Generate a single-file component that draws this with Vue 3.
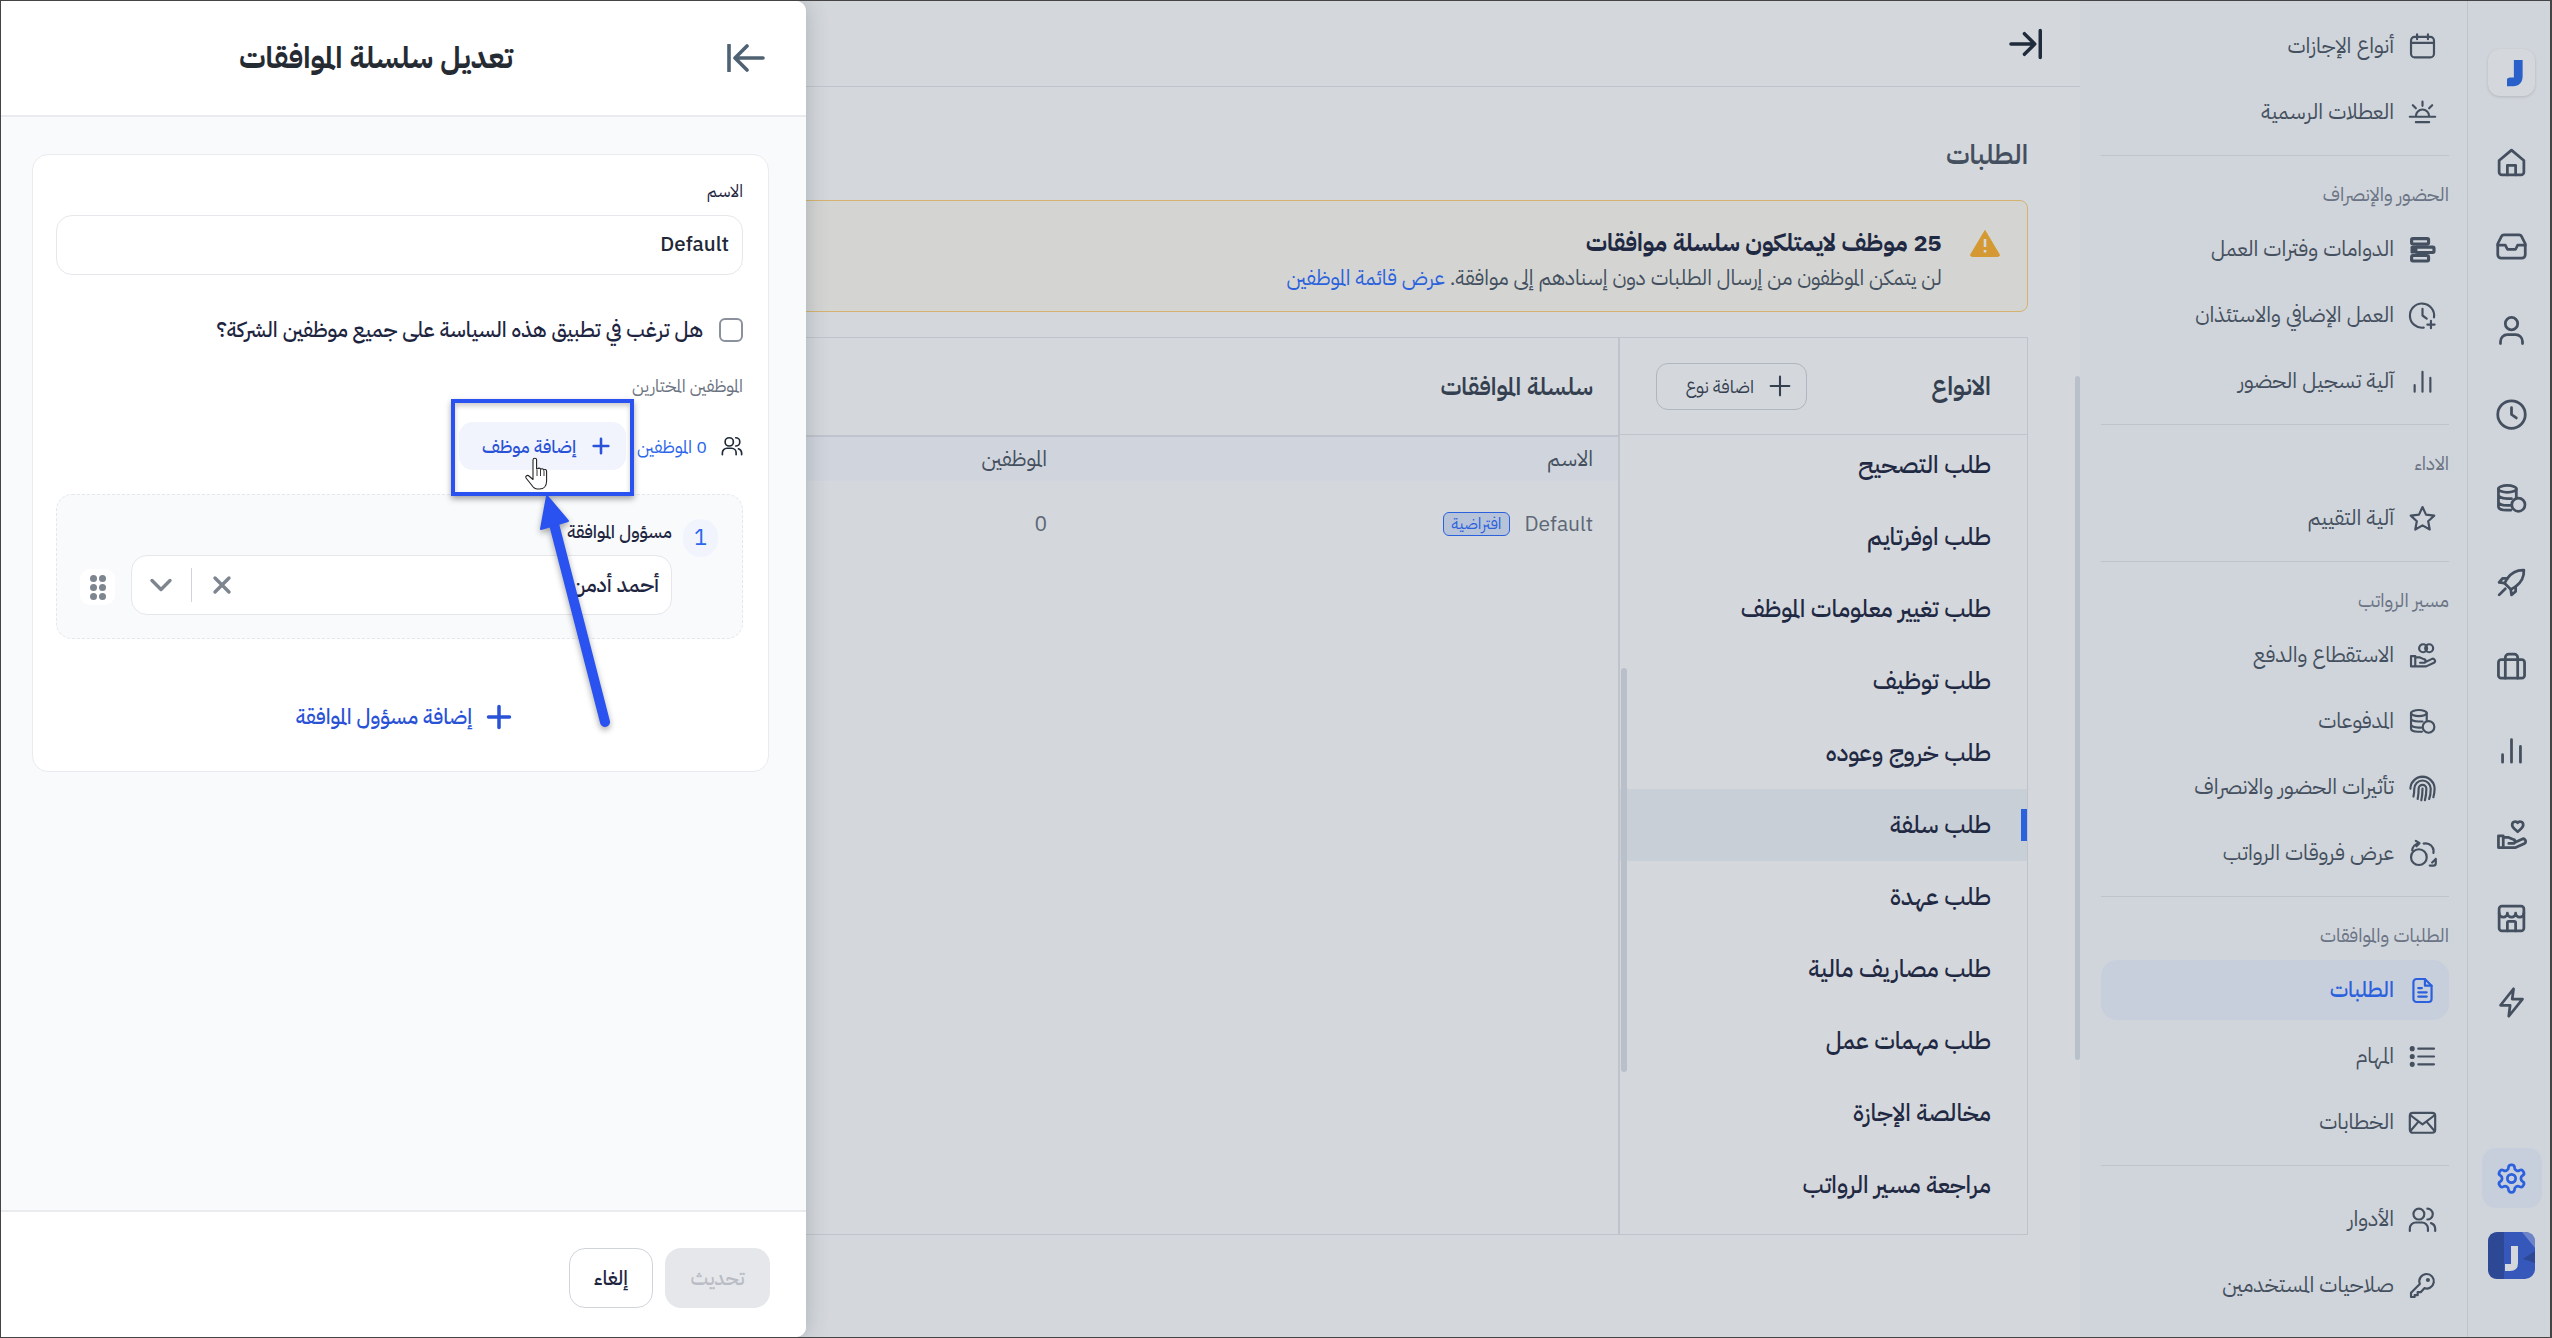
<template>
  <div class="app" dir="rtl">
    <nav class="rail">
      <div class="rail-logo">
        <svg viewBox="0 0 24 24" width="30" height="30"><path d="M13.5 1.500H20.500v13c0 5-3 8-7.500 8H8v-6l2-1h3.500z" fill="#2b69e8" /></svg>
      </div>
      <div class="rail-icons">
        <div v-for="name in railIcons" :key="name" class="rail-item">
          <svg class="ico" viewBox="0 0 24 24" width="33" height="33" v-html="icons[name]"></svg>
        </div>
      </div>
      <div class="rail-bottom">
        <div class="rail-item active">
          <svg class="ico" viewBox="0 0 24 24" width="33" height="33" v-html="icons.gear"></svg>
        </div>
        <svg class="avatar" viewBox="0 0 47 47" width="47" height="47">
          <rect width="47" height="47" rx="10" fill="#3a5fd6" />
          <path d="M0 10q0-10 10-10h6v47h-6q-10 0-10-10z" fill="#2f4ba6" />
          <path d="M34 0h3q10 0 10 10v6z" fill="#7f97e6" />
          <path d="M35 27l12-8v12z" fill="#2f4ba6" />
          <path d="M23 14h7v17q0 8-8 8h-5v-7h6z" fill="#fff" />
        </svg>
      </div>
    </nav>

    <aside class="side">
      <section v-for="group in menu" :key="group.id" class="group" :class="{ plain: !group.title }">
        <h4 v-if="group.title">{{ group.title }}</h4>
        <a v-for="item in group.items" :key="item.text" class="menu-item" :class="{ active: item.active }">
          <svg class="ico" viewBox="0 0 24 24" width="29" height="29" v-html="icons[item.icon]"></svg>
          <span>{{ item.text }}</span>
        </a>
      </section>
    </aside>

    <main class="main">
      <header class="topbar">
        <svg class="ico" viewBox="0 0 24 24" width="38" height="38"><path d="M21 3.500v17M2.500 12H17M11 5.500l6.500 6.500-6.500 6.500" /></svg>
      </header>
      <div class="content">
        <h1>الطلبات</h1>
        <div class="alert">
          <svg viewBox="0 0 30 28" width="30" height="28">
            <path d="M15 1.500 29 25a1.500 1.500 0 0 1-1.300 2.500H2.300A1.500 1.500 0 0 1 1 25z" fill="#ffb12c" stroke="#ffb12c" stroke-linejoin="round" />
            <path d="M15 10v8M15 21v2.500" stroke="#fff" stroke-width="2.600" fill="none" />
          </svg>
          <div class="alert-text">
            <strong>25 موظف لايمتلكون سلسلة موافقات</strong>
            <p>لن يتمكن الموظفون من إرسال الطلبات دون إسنادهم إلى موافقة. <a>عرض قائمة الموظفين</a></p>
          </div>
        </div>

        <div class="board">
          <div class="types">
            <div class="types-head">
              <h3>الانواع</h3>
              <button class="add-type">
                <svg class="ico" viewBox="0 0 24 24" width="28" height="28"><path d="M12 4v16M4 12h16" /></svg>
                اضافة نوع
              </button>
            </div>
            <ul>
              <li v-for="type in types" :key="type" :class="{ selected: type === 'طلب سلفة' }">{{ type }}</li>
            </ul>
            <div class="types-thumb"></div>
          </div>
          <div class="chains">
            <h3 class="chains-title">سلسلة الموافقات</h3>
            <div class="table-row head"><span>الاسم</span><span>الموظفين</span></div>
            <div class="table-row">
              <span class="name">Default <em>افتراضية</em></span>
              <span>0</span>
            </div>
          </div>
        </div>
      </div>
      <div class="main-thumb"></div>
    </main>

    <div class="overlay"></div>

    <div class="drawer">
      <header class="drawer-head">
        <svg class="ico" viewBox="0 0 38 28" width="38" height="28"><path d="M36 14H8M20 2 8 14l12 12M2 1v26" /></svg>
        <h2>تعديل سلسلة الموافقات</h2>
      </header>
      <div class="drawer-body">
        <div class="form-card">
          <label class="field-label">الاسم</label>
          <div class="input">Default</div>
          <div class="check-row">
            <span class="checkbox"></span>
            <span>هل ترغب في تطبيق هذه السياسة على جميع موظفين الشركة؟</span>
          </div>
          <div class="muted-label">الموظفين المختارين</div>
          <div class="staff-row">
            <svg class="ico users" viewBox="0 0 24 24" width="22" height="22" v-html="icons.users"></svg>
            <span class="staff-count">0 الموظفين</span>
            <button class="add-staff">
              <svg class="ico" viewBox="0 0 24 24" width="22" height="22"><path d="M12 4v16M4 12h16" /></svg>
              إضافة موظف
            </button>
          </div>
          <div class="approver">
            <span class="step">1</span>
            <div class="approver-main">
              <div class="approver-label">مسؤول الموافقة</div>
              <div class="select">
                <span>أحمد أدمن</span>
                <div class="select-tools">
                  <svg viewBox="0 0 24 24" width="24" height="24" class="tool"><path d="M5 5l14 14M19 5 5 19" /></svg>
                  <i></i>
                  <svg viewBox="0 0 24 24" width="24" height="24" class="tool"><path d="M3 7.500l9 9 9-9" /></svg>
                </div>
              </div>
            </div>
            <div class="handle"><b v-for="n in 6" :key="n"></b></div>
          </div>
          <button class="add-approver">
            <svg class="ico" viewBox="0 0 24 24" width="28" height="28"><path d="M12 3v18M3 12h18" /></svg>
            إضافة مسؤول الموافقة
          </button>
        </div>
      </div>
      <footer class="drawer-foot">
        <button class="btn-update">تحديث</button>
        <button class="btn-cancel">إلغاء</button>
      </footer>
    </div>

    <!-- annotation drawn over the screenshot -->
    <div class="mark"></div>
    <svg class="arrow" viewBox="0 0 120 250" width="120" height="250">
      <path d="M100 226 49 28" stroke="#2952f0" stroke-width="10" stroke-linecap="round" fill="none" />
      <path d="M42 0 36 33 63 25z" fill="#2952f0" stroke="#2952f0" stroke-width="2" stroke-linejoin="round" />
    </svg>
    <svg class="hand" viewBox="0 0 26 34" width="26" height="34">
      <path d="M9 17V3a1.800 1.800 0 0 1 3.600 0v9l1-.2a1.700 1.700 0 0 1 3 .6 1.700 1.700 0 0 1 3 .7 1.700 1.700 0 0 1 3 1V24c0 5-3 8-7 8h-2c-3 0-4.500-1.500-6-4L2 21c-1-2 1.500-3.500 3-2l4 3.500z" fill="#fff" stroke="#222" stroke-width="1.100" stroke-linejoin="round" />
      <path d="M13 13v6M16.500 13v6M20 14v5" stroke="#222" stroke-width=".9" fill="none" />
    </svg>
  </div>
</template>

<script setup>
const icons = {
  home: '<path d="M3 10.500 12 3l9 7.500V19a2 2 0 0 1-2 2H5a2 2 0 0 1-2-2z"/><path d="M9 21v-7h6v7"/>',
  inbox: '<path d="M6.500 3.500h11a2 2 0 0 1 1.800 1.100L22 10v8a2.500 2.500 0 0 1-2.500 2.500h-15A2.500 2.500 0 0 1 2 18v-8l2.700-5.400a2 2 0 0 1 1.800-1.100z"/><path d="M2 11h5.500l1.500 3h6l1.500-3H22"/>',
  user: '<circle cx="12" cy="7" r="4.500"/><path d="M4 21.500v-1.500a5 5 0 0 1 5-5h6a5 5 0 0 1 5 5v1.500"/>',
  clock: '<circle cx="12" cy="12" r="10"/><path d="M12 7v5l3.500 2.500"/>',
  coins: '<ellipse cx="9" cy="5" rx="6.500" ry="2.500"/><path d="M2.500 5v13c0 1.400 2.500 2.500 6 2.500h3M15.500 5v6M2.500 9.500C2.500 11 5.500 12 9 12h3M2.500 14.500c0 1.500 3 2.500 6.500 2.500h2"/><circle cx="17" cy="16.500" r="4.800"/>',
  rocket: '<path d="M21 3c-5-.2-9 1.800-12 6l-2 3.500 4.500 4.500 3.500-2c4-3 6.200-7 6-12z"/><path d="M9 9H5.500L3 12l4 .5M15 15v3.500L12 21l-.5-4M3 21l4.500-4.500"/>',
  case: '<rect x="2.500" y="7" width="19" height="13.500" rx="2"/><path d="M7.500 7V5.500a2.500 2.500 0 0 1 2.500-2.500h4a2.500 2.500 0 0 1 2.500 2.500V7M7.500 7v13.500M16.500 7v13.500"/>',
  bars: '<path d="M5.500 20.500v-5.500M12 20.500V4M18.500 20.500V9"/>',
  heart: '<path d="M2.500 13h3.500v8.500H2.500zM6 14h3.500l3.500 1.500a1.500 1.500 0 0 1 0 3h-3M14 18l5.500-2.500a1.800 1.800 0 0 1 2 3l-6.500 3H6"/><path d="M16.500 3.500c-1-1.500-4-1-4 1.500 0 2 2.500 3.500 4 5 1.500-1.500 4-3 4-5 0-2.500-3-3-4-1.500z"/>',
  store: '<rect x="3" y="3" width="18" height="18" rx="2"/><path d="M3 8a3 3 0 0 0 6 0 3 3 0 0 0 6 0 3 3 0 0 0 6 0M9 21v-6a1 1 0 0 1 1-1h4a1 1 0 0 1 1 1v6"/>',
  bolt: '<path d="M13.500 2 4 14h7l-1 8 10-12.500h-7.500z"/>',
  gear: '<path d="M12.220 2h-.44a2 2 0 0 0-2 2v.18a2 2 0 0 1-1 1.730l-.43.250a2 2 0 0 1-2 0l-.15-.08a2 2 0 0 0-2.730.730l-.22.380a2 2 0 0 0 .730 2.730l.15.100a2 2 0 0 1 1 1.720v.510a2 2 0 0 1-1 1.740l-.15.090a2 2 0 0 0-.730 2.730l.22.380a2 2 0 0 0 2.730.730l.15-.08a2 2 0 0 1 2 0l.43.250a2 2 0 0 1 1 1.730V20a2 2 0 0 0 2 2h.44a2 2 0 0 0 2-2v-.18a2 2 0 0 1 1-1.730l.43-.25a2 2 0 0 1 2 0l.15.08a2 2 0 0 0 2.730-.730l.22-.39a2 2 0 0 0-.730-2.730l-.15-.08a2 2 0 0 1-1-1.740v-.5a2 2 0 0 1 1-1.740l.15-.09a2 2 0 0 0 .730-2.730l-.22-.38a2 2 0 0 0-2.730-.730l-.15.08a2 2 0 0 1-2 0l-.43-.25a2 2 0 0 1-1-1.730V4a2 2 0 0 0-2-2z"/><circle cx="12" cy="12" r="3"/>',
  calendar: '<rect x="2.500" y="4" width="19" height="17" rx="3"/><path d="M2.500 9h19M7.500 2v4M16.500 2v4"/>',
  sunset: '<path d="M6.500 15a5.500 5.500 0 0 1 11 0M1.500 15.500h21M6.500 20h11M12 3v3.500M4 6l2.500 2.500M20 6l-2.500 2.500"/>',
  shifts: '<rect x="3" y="3" width="14" height="4.500" rx="1" stroke-width="2.600"/><rect x="6.500" y="10" width="15" height="4.500" rx="1" stroke-width="2.600"/><rect x="3" y="17" width="14" height="4.500" rx="1" stroke-width="2.600"/><path d="M3 10h3v4.500H3z" fill="currentColor"/>',
  overtime: '<path d="M21.500 13.500A10 10 0 1 0 13 22"/><path d="M12 6.500V12l3.500 2.500M19 16.500v6M16 19.500h6"/>',
  star: '<path d="M12 2.500l2.900 6.300 6.800.8-5 4.700 1.300 6.800-6-3.400-6 3.400 1.300-6.800-5-4.700 6.800-.8z"/>',
  handCoins: '<path d="M2.500 12.500h3.500v8.500H2.500zM6 13.500h3.500l3.500 1.500a1.500 1.500 0 0 1 0 3h-3M14 17.500l5.500-2.500a1.800 1.800 0 0 1 2 3l-6.500 3H6"/><circle cx="12.500" cy="6" r="3.300"/><circle cx="17.500" cy="6" r="3.300"/>',
  finger: '<path d="M3.500 8a10 10 0 0 1 17 0M2 13a10 10 0 0 1 20 0c0 3-.5 5-1 7M4.500 19.500c.5-2 .7-4.500.7-6.500a6.800 6.800 0 0 1 13.600 0c0 3-.3 6-1.300 8.500M8 21.500c.5-2.500.8-5.500.8-8.500a3.200 3.200 0 0 1 6.400 0c0 3.500-.4 6.500-1.200 9.500M12 13c0 3.500-.3 6.500-1 9.500"/>',
  diff: '<circle cx="9" cy="15" r="6.500"/><path d="M13 3.800a6.500 6.500 0 0 1 8 7.700M3.500 9.500A6.500 6.500 0 0 1 9 3.500M6.500 1.500 9.500 3.500 7 6M23 16.500v3.500a2 2 0 0 1-2 2h-3M20 19.500 23 16.500"/>',
  doc: '<path d="M14 2.500H7a2.500 2.500 0 0 0-2.500 2.500v14A2.500 2.500 0 0 0 7 21.500h10a2.500 2.500 0 0 0 2.500-2.500V8z"/><path d="M14 2.500V8h5.500M8.500 10h3M8.500 13.500h7M8.500 17h7"/>',
  list: '<path d="M8.500 5.500h13M8.500 12h13M8.500 18.500h13"/><circle cx="3.500" cy="5.500" r="1.200" fill="currentColor"/><circle cx="3.500" cy="12" r="1.200" fill="currentColor"/><circle cx="3.500" cy="18.500" r="1.200" fill="currentColor"/>',
  mail: '<rect x="1.500" y="4" width="21" height="16.500" rx="2.500"/><path d="M2 6l10 7.500L22 6M2 19l6.500-7.500M22 19l-6.500-7.500"/>',
  users: '<circle cx="9" cy="7.500" r="4.500"/><path d="M1.500 21.500v-2a5 5 0 0 1 5-5h5a5 5 0 0 1 5 5v2M16 3a4.500 4.500 0 0 1 0 9M19 15a5 5 0 0 1 3.500 4.500v2"/>',
  key: '<path d="M15.500 2.500a6 6 0 1 1-2 11.700L10.500 17.500H8v2.500H5.500v1.500H2.500v-3.500l7.300-7.300A6 6 0 0 1 15.500 2.500z"/><circle cx="16.500" cy="7.500" r=".8"/>',
}

const railIcons = ['home', 'inbox', 'user', 'clock', 'coins', 'rocket', 'case', 'bars', 'heart', 'store', 'bolt']

const menu = [
  { id: 1, items: [
    { icon: 'calendar', text: 'أنواع الإجازات' },
    { icon: 'sunset', text: 'العطلات الرسمية' },
  ] },
  { id: 2, title: 'الحضور والإنصراف', items: [
    { icon: 'shifts', text: 'الدوامات وفترات العمل' },
    { icon: 'overtime', text: 'العمل الإضافي والاستئذان' },
    { icon: 'bars', text: 'آلية تسجيل الحضور' },
  ] },
  { id: 3, title: 'الاداء', items: [
    { icon: 'star', text: 'آلية التقييم' },
  ] },
  { id: 4, title: 'مسير الرواتب', items: [
    { icon: 'handCoins', text: 'الاستقطاع والدفع' },
    { icon: 'coins', text: 'المدفوعات' },
    { icon: 'finger', text: 'تأثيرات الحضور والانصراف' },
    { icon: 'diff', text: 'عرض فروقات الرواتب' },
  ] },
  { id: 5, title: 'الطلبات والموافقات', items: [
    { icon: 'doc', text: 'الطلبات', active: true },
    { icon: 'list', text: 'المهام' },
    { icon: 'mail', text: 'الخطابات' },
  ] },
  { id: 6, items: [
    { icon: 'users', text: 'الأدوار' },
    { icon: 'key', text: 'صلاحيات المستخدمين' },
    { icon: 'star', text: 'تقييم المهارات والكفايات' },
  ] },
]

const types = [
  'طلب التصحيح',
  'طلب اوفرتايم',
  'طلب تغيير معلومات الموظف',
  'طلب توظيف',
  'طلب خروج وعوده',
  'طلب سلفة',
  'طلب عهدة',
  'طلب مصاريف مالية',
  'طلب مهمات عمل',
  'مخالصة الإجازة',
  'مراجعة مسير الرواتب',
]
</script>

<style>
html, body {
  margin: 0;
  background: #fff;
}
</style>

<style scoped>
* {
  box-sizing: border-box;
}
.app {
  position: relative;
  display: flex;
  width: 2552px;
  height: 1338px;
  overflow: hidden;
  border: 1px solid #444;
  border-right-width: 2px;
  background: #fff;
  color: #1f2937;
  font-family: "IBM Plex Sans Arabic", "Noto Sans", "DejaVu Sans", sans-serif;
  font-variant-ligatures: common-ligatures discretionary-ligatures;
}
button {
  font-family: inherit;
  font-variant-ligatures: inherit;
  cursor: pointer;
}
.ico {
  flex: none;
  fill: none;
  stroke: currentColor;
  stroke-width: 1.800;
  stroke-linecap: round;
  stroke-linejoin: round;
}

/* icon rail */
.rail {
  flex: none;
  display: flex;
  flex-direction: column;
  align-items: center;
  width: 83px;
  height: 100%;
  padding: 48px 0 58px 5px;
  border-left: 1px solid #e5e7eb;
  background: #fbfbfe;
  color: #4b5563;
}
.rail .ico {
  stroke-width: 2;
}
.rail-logo {
  display: flex;
  align-items: center;
  justify-content: center;
  width: 47px;
  height: 47px;
  border-radius: 12px;
  background: #fff;
  box-shadow: 0 1px 3px rgba(0, 0, 0, 0.15);
}
.rail-icons {
  display: flex;
  flex-direction: column;
  gap: 24px;
  margin-top: 36px;
}
.rail-item {
  display: flex;
  align-items: center;
  justify-content: center;
  width: 60px;
  height: 60px;
  border-radius: 14px;
}
.rail-item.active {
  background: #f1f4ff;
  color: #2c6bff;
}
.rail-bottom {
  display: flex;
  flex-direction: column;
  align-items: center;
  gap: 24px;
  margin-top: auto;
}

/* text menu */
.side {
  flex: none;
  width: 387px;
  height: 100%;
  padding: 12px 18px 0 21px;
  overflow: hidden;
  background: #fbfbfe;
}
.group {
  display: flex;
  flex-direction: column;
  padding: 24px 0 10px;
  border-bottom: 1px solid #e5e7eb;
}
.group.plain {
  padding-top: 20px;
}
.group:first-child {
  padding-top: 0;
}
.group:last-child {
  border-bottom: 0;
}
.group h4 {
  height: 30px;
  margin: 0 0 6px;
  font-size: 19px;
  font-weight: 400;
  line-height: 30px;
  color: #7a8291;
}
.menu-item {
  flex: none;
  display: flex;
  align-items: center;
  gap: 14px;
  height: 60px;
  margin: 3px 0;
  padding: 0 12px;
  border-radius: 16px;
  font-size: 21.500px;
  color: #4b5563;
}
.menu-item.active {
  background: #f1f4ff;
  color: #2c6bff;
  font-weight: 500;
}

/* page */
.main {
  position: relative;
  flex: 1;
  min-width: 0;
}
.topbar {
  display: flex;
  align-items: center;
  height: 86px;
  padding: 0 35px;
  border-bottom: 1px solid #e5e7eb;
  color: #1f2937;
}
.topbar .ico {
  stroke-width: 2.200;
}
.content {
  padding: 48px 52px 0 52px;
}
h1 {
  height: 40px;
  margin: 0;
  font-size: 27px;
  font-weight: 600;
  line-height: 40px;
  color: #4b5563;
}
.alert {
  display: flex;
  align-items: flex-start;
  gap: 28px;
  height: 112px;
  margin-top: 25px;
  padding: 28px 27px 0;
  border: 1px solid #ffd178;
  border-radius: 8px;
  background: #fffcf4;
}
.alert svg {
  flex: none;
}
.alert-text {
  margin-top: -5px;
}
.alert-text strong {
  display: block;
  font-size: 24px;
  font-weight: 700;
  line-height: 38px;
  color: #1e2540;
}
.alert-text p {
  margin: 0;
  font-size: 21px;
  line-height: 32px;
  color: #4b5563;
}
.alert-text a {
  color: #2c6bff;
}
.board {
  display: flex;
  height: 898px;
  margin-top: 25px;
  border: 1px solid #e5e7eb;
}
.types {
  position: relative;
  flex: none;
  width: 409px;
  border-left: 2px solid #e5e7eb;
  overflow: hidden;
}
.types-head {
  display: flex;
  align-items: center;
  justify-content: space-between;
  height: 97px;
  padding: 0 36px 0 36px;
  border-bottom: 1px solid #e5e7eb;
}
h3 {
  margin: 0;
  font-size: 24px;
  font-weight: 600;
  color: #374151;
}
.types-head h3 {
  font-size: 25px;
}
.add-type {
  display: flex;
  align-items: center;
  gap: 12px;
  width: 151px;
  height: 47px;
  padding: 0 12px;
  border: 1px solid #d1d5db;
  border-radius: 12px;
  background: #fff;
  font-size: 18px;
  color: #374151;
}
.types ul {
  margin: -6px 0 0;
  padding: 0;
  list-style: none;
}
.types li {
  position: relative;
  display: flex;
  align-items: center;
  height: 72px;
  padding: 0 36px;
  font-size: 24px;
  font-weight: 500;
  color: #1e2540;
}
.types li.selected {
  background: #f1f4f9;
}
.types li.selected::before {
  content: "";
  position: absolute;
  top: 20px;
  right: 0;
  width: 6px;
  height: 32px;
  background: #2c6bff;
}
.types-thumb {
  position: absolute;
  top: 330px;
  left: 1px;
  width: 6px;
  height: 404px;
  border-radius: 3px;
  background: #dfe2e8;
}
.chains {
  flex: 1;
}
.chains-title {
  display: flex;
  align-items: center;
  height: 97px;
  padding: 0 25px;
}
.table-row {
  display: grid;
  grid-template-columns: 546px 1fr;
  align-items: center;
  height: 86px;
  padding: 0 25px;
  font-size: 21px;
  color: #6b7280;
}
.table-row.head {
  height: 46px;
  border-top: 2px solid #e5e7eb;
  background: #fafbff;
  font-size: 21.500px;
  color: #4b5563;
}
.name {
  display: flex;
  align-items: center;
  gap: 14px;
}
.name em {
  padding: 0 8px;
  border: 1px solid #2c6bff;
  border-radius: 6px;
  background: #dbe5fb;
  font-size: 16px;
  font-style: normal;
  line-height: 22px;
  color: #2c6bff;
}
.main-thumb {
  position: absolute;
  top: 375px;
  right: 0;
  width: 5px;
  height: 684px;
  border-radius: 3px;
  background: #dfe2e8;
}

.overlay {
  position: absolute;
  inset: 0;
  background: rgba(40, 60, 80, 0.2);
}

/* side drawer */
.drawer {
  position: absolute;
  top: 0;
  bottom: 0;
  left: 0;
  display: flex;
  flex-direction: column;
  width: 805px;
  background: #f9fafb;
  border-radius: 0 10px 10px 0;
  box-shadow: 0 0 22px rgba(50, 60, 80, 0.25);
}
.drawer-head {
  display: flex;
  align-items: center;
  height: 116px;
  padding: 0 41px 0 0;
  border-bottom: 2px solid #e9ebef;
  background: #fff;
  border-radius: 0 10px 0 0;
  color: #4f6274;
}
.drawer-head .ico {
  stroke-width: 3.600;
}
.drawer-head h2 {
  flex: 1;
  margin: 0 0 2px;
  padding-left: 24px;
  font-size: 30px;
  font-weight: 700;
  text-align: center;
  color: #252b33;
}
.drawer-body {
  flex: 1;
  padding: 37px 37px 0 31px;
}
.form-card {
  height: 618px;
  padding: 23px 25px 0 23px;
  border: 1px solid #e9ebef;
  border-radius: 16px;
  background: #fff;
}
.field-label {
  display: block;
  height: 28px;
  margin-bottom: 9px;
  font-size: 17px;
  line-height: 28px;
  color: #1e2540;
}
.input {
  height: 60px;
  padding: 0 13px;
  border: 1px solid #e5e7eb;
  border-radius: 16px;
  direction: rtl;
  font-size: 20.500px;
  font-weight: 500;
  line-height: 58px;
  color: #1f2937;
}
.check-row {
  display: flex;
  align-items: center;
  gap: 16px;
  height: 30px;
  margin-top: 40px;
  font-size: 21px;
  font-weight: 500;
  color: #1e2540;
}
.checkbox {
  width: 24px;
  height: 24px;
  border: 2px solid #8a919c;
  border-radius: 6px;
}
.muted-label {
  height: 26px;
  margin-top: 28px;
  font-size: 17.500px;
  line-height: 26px;
  color: #6b7280;
}
.staff-row {
  display: flex;
  align-items: center;
  height: 48px;
  margin-top: 23px;
  font-size: 18px;
  color: #2b66eb;
}
.users {
  color: #1f2937;
}
.staff-count {
  margin: 0 14px 0 11px;
}
.add-staff {
  display: flex;
  align-items: center;
  gap: 14px;
  width: 167px;
  height: 48px;
  padding: 0 14px;
  border: 0;
  border-radius: 14px;
  background: #f1f4fd;
  font-size: 18px;
  font-weight: 500;
  color: #2952d6;
}
.add-staff .ico {
  stroke-width: 2.800;
}
.approver {
  display: flex;
  gap: 11px;
  height: 145px;
  margin-top: 24px;
  padding: 24px 24px 0 24px;
  border: 1px dashed #e5e7eb;
  border-radius: 16px;
  background: #f9fafb;
}
.step {
  flex: none;
  width: 35px;
  height: 38px;
  border-radius: 18px;
  background: #f1f4fd;
  font-size: 22px;
  line-height: 38px;
  text-align: center;
  color: #2b66eb;
}
.approver-main {
  width: 541px;
  flex: none;
}
.approver-label {
  height: 26px;
  margin-bottom: 10px;
  font-size: 18px;
  font-weight: 500;
  line-height: 26px;
  color: #1e2540;
}
.select {
  display: flex;
  align-items: center;
  justify-content: space-between;
  height: 60px;
  padding: 0 12px 0 17px;
  border: 1px solid #e5e7eb;
  border-radius: 16px;
  background: #fff;
  font-size: 21px;
  font-weight: 500;
  color: #1e2540;
}
.select-tools {
  display: flex;
  align-items: center;
  gap: 18px;
  direction: rtl;
}
.select-tools i {
  width: 1px;
  height: 34px;
  background: #d1d5db;
}
.tool {
  fill: none;
  stroke: #7d858f;
  stroke-width: 3.400;
  stroke-linecap: round;
  stroke-linejoin: round;
}
.handle {
  display: grid;
  grid-template-columns: 7px 7px;
  gap: 2px 2px;
  align-content: center;
  justify-content: center;
  flex: none;
  width: 35px;
  height: 36px;
  margin-top: 50px;
  margin-right: 5px;
  border-radius: 10px;
  background: #fff;
}
.handle b {
  width: 7px;
  height: 7px;
  border-radius: 50%;
  background: #7d858f;
}
.add-approver {
  display: flex;
  align-items: center;
  justify-content: center;
  gap: 13px;
  width: 100%;
  height: 48px;
  margin-top: 54px;
  padding: 0 0 0 10px;
  border: 0;
  background: none;
  font-size: 21px;
  font-weight: 500;
  color: #2952d6;
}
.add-approver .ico {
  stroke-width: 3;
}
.drawer-foot {
  display: flex;
  gap: 12px;
  height: 127px;
  padding: 36px 36px 0 0;
  border-top: 2px solid #e9ebef;
  background: #fff;
  border-radius: 0 0 10px 0;
}
.drawer-foot button {
  height: 60px;
  border-radius: 16px;
  font-size: 20px;
  font-weight: 500;
}
.btn-update {
  width: 105px;
  border: 0;
  background: #e5e7eb;
  color: #b9bcc4;
}
.btn-cancel {
  width: 84px;
  border: 1px solid #d1d5db;
  background: #fff;
  color: #1e2540;
}

/* blue call-out on top of the screenshot */
.mark {
  position: absolute;
  top: 398px;
  left: 450px;
  width: 183px;
  height: 97px;
  border: 4px solid #2952f0;
  box-shadow: 0 3px 6px rgba(0, 0, 0, 0.35), inset 0 3px 5px rgba(0, 0, 0, 0.2);
}
.arrow {
  position: absolute;
  top: 495px;
  left: 504px;
  filter: drop-shadow(0 3px 3px rgba(0, 0, 0, 0.35));
}
.hand {
  position: absolute;
  top: 456px;
  left: 523px;
}
</style>
